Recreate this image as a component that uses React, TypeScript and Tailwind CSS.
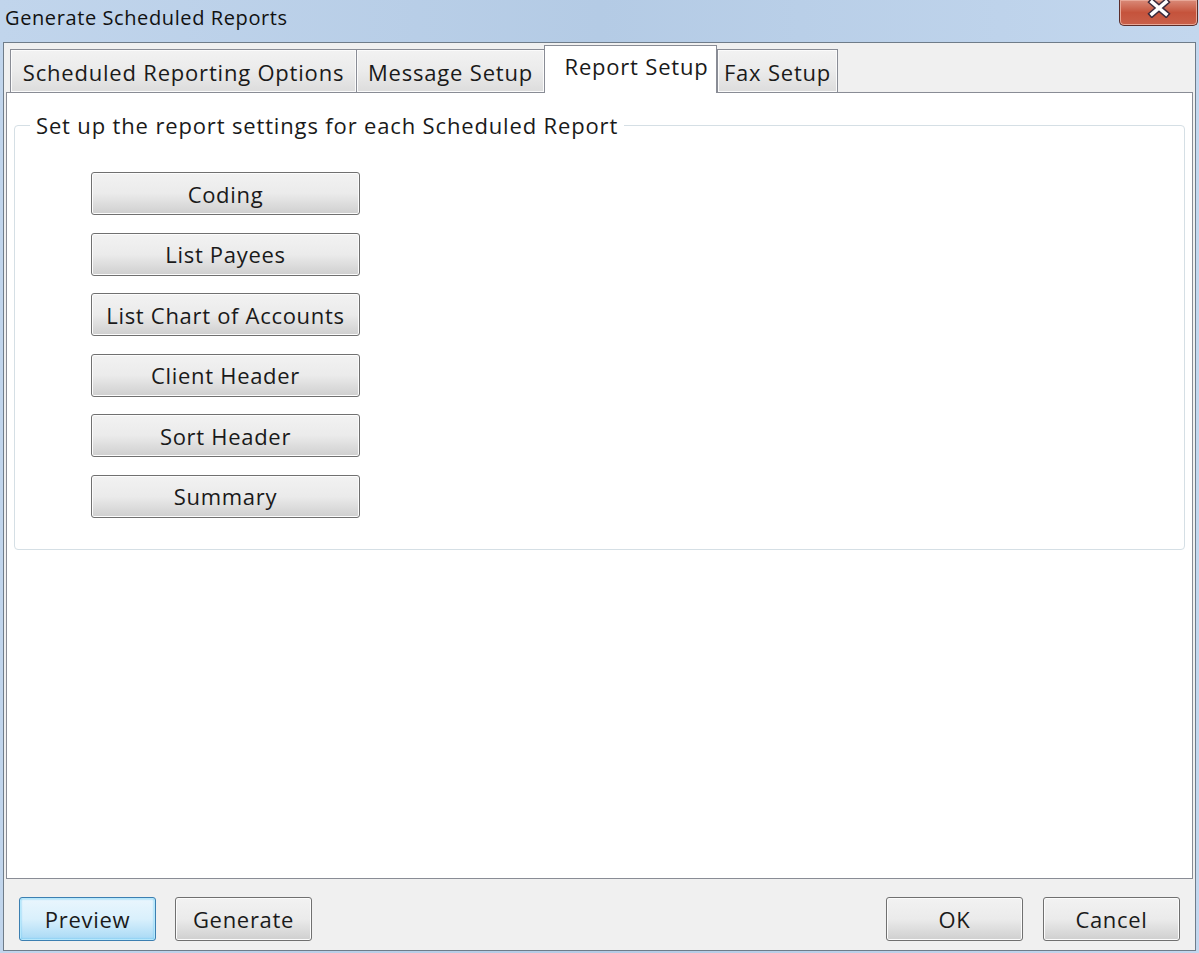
// Generate Scheduled Reports dialog, Report Setup tab

const reportButtons = [
  'Coding',
  'List Payees',
  'List Chart of Accounts',
  'Client Header',
  'Sort Header',
  'Summary',
];

const tabs = [
  { label: 'Scheduled Reporting Options', width: 'w-[347px]' },
  { label: 'Message Setup', width: 'w-[189px]' },
  { label: 'Report Setup', width: 'w-[173px]', active: true },
  { label: 'Fax Setup', width: 'w-[121px]' },
];

const WinButton = ({
  label,
  className = '',
  primary = false,
}: {
  label: string;
  className?: string;
  primary?: boolean;
}) => (
  <button
    className={
      'rounded-[3px] border text-[22px] leading-none tracking-[0.7px] text-[#1a1a1a] ' +
      (primary
        ? 'border-[#3c7fb1] bg-gradient-to-b from-[#eaf6fd] via-[#d9f0fc] to-[#a7d9f5] shadow-[inset_0_0_0_1px_#b6e8fc,inset_0_0_2px_1px_#61c5f3] '
        : 'border-[#707070] bg-gradient-to-b from-[#f2f2f2] from-0% via-[#ebebeb] via-50% to-[#cfcfcf] shadow-[inset_0_0_0_1px_#fcfcfc] ') +
      className
    }
  >
    {label}
  </button>
);

const CloseButton = () => (
  <div className="mr-[1px] flex h-[26px] w-[79px] items-center justify-center rounded-b-[5px] border border-t-0 border-[#5b2d2a] bg-gradient-to-b from-[#d98a78] via-[#c5533c] to-[#c9604a] shadow-[inset_0_0_0_1px_#e8a898]">
    <svg width="24" height="20" viewBox="0 0 24 20" className="-mt-[10px]">
      <path
        d="M5 4 L19 16 M19 4 L5 16"
        stroke="#3b2a3c"
        strokeWidth="6.5"
        strokeLinecap="square"
      />
      <path
        d="M5 4 L19 16 M19 4 L5 16"
        stroke="#ffffff"
        strokeWidth="3.6"
        strokeLinecap="square"
      />
    </svg>
  </div>
);

export default function App() {
  return (
    <div className="flex h-[953px] w-[1199px] flex-col overflow-hidden bg-gradient-to-r from-[#c1d5ec] via-[#b4cbe5] to-[#c3d7ee] font-['Open_Sans',sans-serif]">
      {/* title bar */}
      <div className="flex h-[42px] shrink-0 items-start justify-between">
        <span className="pl-[5px] pt-[6px] text-[20px] leading-[24px] tracking-[0.6px] text-[#111]">
          Generate Scheduled Reports
        </span>
        <CloseButton />
      </div>

      {/* client area */}
      <div className="mx-[3px] mb-[2px] flex flex-1 flex-col border border-[#6f7c89] bg-[#f0f0f0]">
        <div className="flex flex-1 flex-col px-[2px]">
          {/* tab strip */}
          <div className="relative z-10 flex h-[49px] items-end pl-[4px]">
            {tabs.map((t) =>
              t.active ? (
                <div
                  key={t.label}
                  className={`${t.width} -mb-[1px] flex h-[48px] items-start justify-center border border-b-0 border-[#898c95] bg-white pl-[12px] pt-[5px] text-[22px] leading-[30px] tracking-[0.8px] text-[#1a1a1a]`}
                >
                  {t.label}
                </div>
              ) : (
                <div
                  key={t.label}
                  className={`${t.width} -mr-[1px] flex h-[43px] items-center justify-center border border-b-0 border-[#898c95] bg-gradient-to-b from-[#f2f2f2] via-[#ebebeb] to-[#dcdcdc] pt-[1px] text-[22px] leading-[30px] tracking-[0.8px] text-[#1a1a1a] shadow-[inset_0_0_0_1px_#fbfbfb]`}
                >
                  {t.label}
                </div>
              ),
            )}
          </div>

          {/* tab page */}
          <div className="flex h-[787px] flex-col border border-[#898c95] bg-white px-[7px] pt-[19px]">
            <fieldset className="h-[438px] rounded-[4px] border border-[#d5dfe5] p-0">
              <legend className="ml-[15px] px-[6px] text-[22px] leading-[26px] tracking-[0.85px] text-[#1a1a1a]">
                Set up the report settings for each Scheduled Report
              </legend>
              <div className="flex flex-col gap-[17.5px] pl-[76px] pt-[34px]">
                {reportButtons.map((b) => (
                  <WinButton key={b} label={b} className="h-[43px] w-[269px]" />
                ))}
              </div>
            </fieldset>
          </div>

          {/* dialog buttons */}
          <div className="flex flex-1 items-center justify-between px-[13px] pt-[8px]">
            <div className="flex gap-[19px]">
              <WinButton label="Preview" primary className="h-[44px] w-[137px]" />
              <WinButton label="Generate" className="h-[44px] w-[137px]" />
            </div>
            <div className="flex gap-[20px]">
              <WinButton label="OK" className="h-[44px] w-[137px]" />
              <WinButton label="Cancel" className="h-[44px] w-[137px]" />
            </div>
          </div>
        </div>
      </div>
    </div>
  );
}
